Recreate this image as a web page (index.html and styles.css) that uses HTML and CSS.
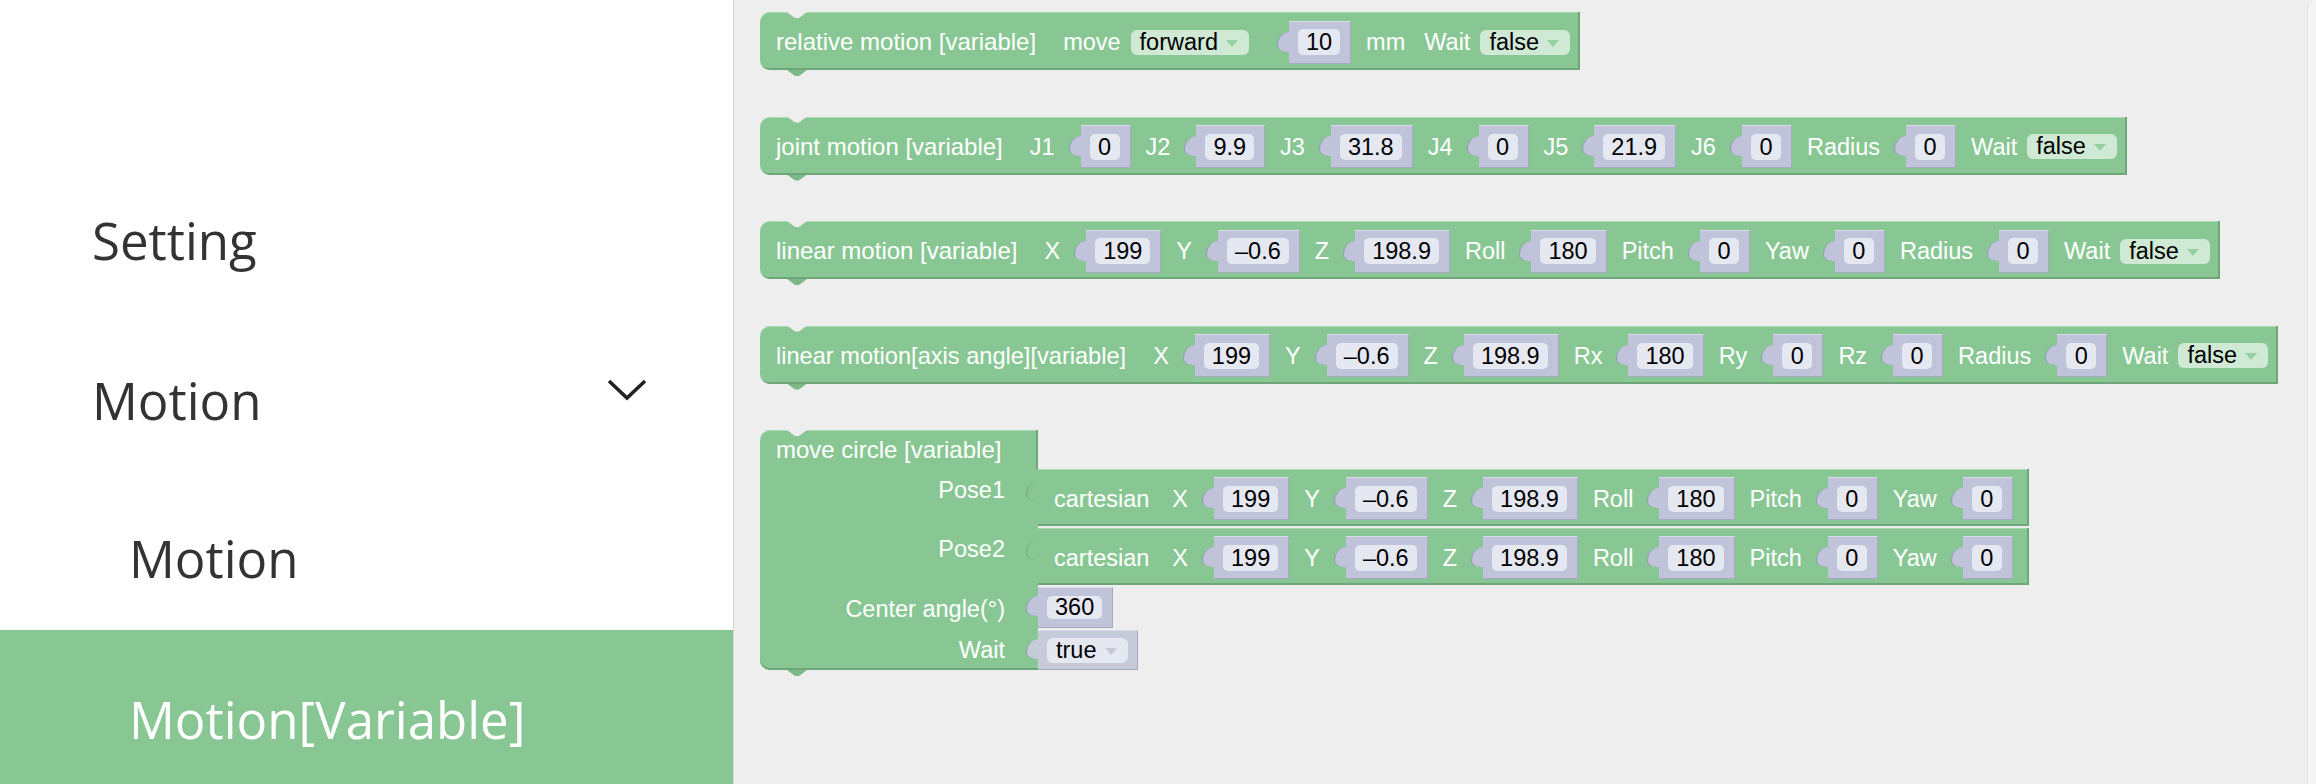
FILE: index.html
```html
<!DOCTYPE html>
<html>
<head>
<meta charset="utf-8">
<link rel="stylesheet" href="styles.css">
</head>
<body>
<div class="app">
  <nav class="side">
    <div class="item l1">Setting</div>
    <div class="item l1"><span>Motion</span>
      <svg class="chev" width="40" height="24" viewBox="0 0 40 24"><polyline points="2,3 20,20 38,3" fill="none" stroke="#222" stroke-width="3.6"/></svg>
    </div>
    <div class="item l2">Motion</div>
    <div class="item l2 active">Motion[Variable]</div>
  </nav>
  <main class="ws">
    <div class="blk">
      <span class="ttl">relative motion [variable]</span>
      <span class="lbl">move</span>
      <span class="dd">forward<i class="arr"></i></span>
      <span class="val"><span class="fld">10</span></span>
      <span class="lbl">mm</span>
      <span class="lbl">Wait</span>
      <span class="dd">false<i class="arr"></i></span>
    </div>
    <div class="blk">
      <span class="ttl">joint motion [variable]</span>
      <span class="lbl">J1</span><span class="val"><span class="fld">0</span></span>
      <span class="lbl">J2</span><span class="val"><span class="fld">9.9</span></span>
      <span class="lbl">J3</span><span class="val"><span class="fld">31.8</span></span>
      <span class="lbl">J4</span><span class="val"><span class="fld">0</span></span>
      <span class="lbl">J5</span><span class="val"><span class="fld">21.9</span></span>
      <span class="lbl">J6</span><span class="val"><span class="fld">0</span></span>
      <span class="lbl">Radius</span><span class="val"><span class="fld">0</span></span>
      <span class="lbl">Wait</span><span class="dd">false<i class="arr"></i></span>
    </div>
    <div class="blk">
      <span class="ttl">linear motion [variable]</span>
      <span class="lbl">X</span><span class="val"><span class="fld">199</span></span>
      <span class="lbl">Y</span><span class="val"><span class="fld">–0.6</span></span>
      <span class="lbl">Z</span><span class="val"><span class="fld">198.9</span></span>
      <span class="lbl">Roll</span><span class="val"><span class="fld">180</span></span>
      <span class="lbl">Pitch</span><span class="val"><span class="fld">0</span></span>
      <span class="lbl">Yaw</span><span class="val"><span class="fld">0</span></span>
      <span class="lbl">Radius</span><span class="val"><span class="fld">0</span></span>
      <span class="lbl">Wait</span><span class="dd">false<i class="arr"></i></span>
    </div>
    <div class="blk">
      <span class="ttl t4">linear motion[axis angle][variable]</span>
      <span class="lbl">X</span><span class="val"><span class="fld">199</span></span>
      <span class="lbl">Y</span><span class="val"><span class="fld">–0.6</span></span>
      <span class="lbl">Z</span><span class="val"><span class="fld">198.9</span></span>
      <span class="lbl">Rx</span><span class="val"><span class="fld">180</span></span>
      <span class="lbl">Ry</span><span class="val"><span class="fld">0</span></span>
      <span class="lbl">Rz</span><span class="val"><span class="fld">0</span></span>
      <span class="lbl">Radius</span><span class="val"><span class="fld">0</span></span>
      <span class="lbl">Wait</span><span class="dd">false<i class="arr"></i></span>
    </div>
    <div class="circ">
      <div class="cc chead">move circle [variable]</div>
      <div class="cc clbl top">Pose1</div>
      <div class="cin">
        <div class="blk out">
          <span class="ttl">cartesian</span>
          <span class="lbl">X</span><span class="val"><span class="fld">199</span></span>
          <span class="lbl">Y</span><span class="val"><span class="fld">–0.6</span></span>
          <span class="lbl">Z</span><span class="val"><span class="fld">198.9</span></span>
          <span class="lbl">Roll</span><span class="val"><span class="fld">180</span></span>
          <span class="lbl">Pitch</span><span class="val"><span class="fld">0</span></span>
          <span class="lbl">Yaw</span><span class="val"><span class="fld">0</span></span>
        </div>
      </div>
      <div class="cc clbl top">Pose2</div>
      <div class="cin">
        <div class="blk out">
          <span class="ttl">cartesian</span>
          <span class="lbl">X</span><span class="val"><span class="fld">199</span></span>
          <span class="lbl">Y</span><span class="val"><span class="fld">–0.6</span></span>
          <span class="lbl">Z</span><span class="val"><span class="fld">198.9</span></span>
          <span class="lbl">Roll</span><span class="val"><span class="fld">180</span></span>
          <span class="lbl">Pitch</span><span class="val"><span class="fld">0</span></span>
          <span class="lbl">Yaw</span><span class="val"><span class="fld">0</span></span>
        </div>
      </div>
      <div class="cc clbl">Center angle(°)</div>
      <div class="cin"><span class="val cval"><span class="fld small">360</span></span></div>
      <div class="cc clbl last">Wait</div>
      <div class="cin"><span class="val cval bool"><span class="dd grey">true<i class="arr"></i></span></span></div>
    </div>
  </main>
</div>
</body>
</html>
```

FILE: styles.css
```css
* { box-sizing: border-box; }
html, body { margin: 0; padding: 0; }
body { width: 2316px; height: 784px; overflow: hidden; background: #eeeeee; }

.app { display: flex; height: 784px; }

.side {
  width: 734px;
  flex: none;
  background: #ffffff;
  border-right: 1px solid #d6d6d6;
  padding-top: 160px;
  font-family: "Open Sans", "Noto Sans", sans-serif;
  font-size: 51px;
  color: #333333;
}
.item { display: flex; align-items: center; height: 160px; padding-left: 92px; padding-right: 86px; }
.item.l1 span { flex: none; }
.chev { margin-left: auto; margin-bottom: 20px; }
.item.l2 { padding-left: 129px; height: 150px; padding-top: 6px; }
.item.active { background: #88c794; color: #ffffff; height: 160px; padding-top: 18px; }

.ws {
  flex: 1;
  display: flex;
  flex-direction: column;
  align-items: flex-start;
  gap: 46.5px;
  padding: 12px 0 0 26px;
  font-family: "Liberation Sans", Arial, sans-serif;
  font-size: 23.5px;
  color: #ffffff;
  position: relative;
}
.ws::after {
  content: "";
  position: absolute;
  top: 0; right: 0; bottom: 0;
  width: 8px;
  background: #f4f4f4;
  border-left: 1px solid #e4e4e4;
  border-top-left-radius: 8px;
}

/* statement block */
.blk {
  position: relative;
  display: flex;
  align-items: center;
  height: 58px;
  padding: 2px 10px 0 16px;
  background: #88c794;
  border-radius: 10px 0 0 10px;
  box-shadow: inset -2px -2px 0 #6ea579, inset 0 1px 0 #a9dab3;
  white-space: nowrap;
}
.blk::before {
  content: "";
  position: absolute;
  top: 0; left: 27px;
  width: 20px; height: 6px;
  background: #eeeeee;
  clip-path: polygon(0 0, 100% 0, 60% 100%, 40% 100%);
}
.blk::after {
  content: "";
  position: absolute;
  bottom: -6px; left: 27px;
  width: 20px; height: 6px;
  background: #7db889;
  clip-path: polygon(0 0, 100% 0, 60% 100%, 40% 100%);
}
.ttl { line-height: 26px; font-size: 24px; }
.ttl.t4 { font-size: 23.6px; }
.ttl + * { margin-left: 27px !important; }
.lbl { line-height: 26px; }
.lbl + .lbl { margin-left: 19px; }
.lbl + .dd { margin-left: 10px; }
.val + .lbl { margin-left: 15px; }

/* value input (number shadow) */
.val {
  position: relative;
  display: flex;
  align-items: center;
  height: 43px;
  margin-left: 26px;
  padding: 0 10px 0 9px;
  background: #c0c3d9;
  border-top: 1px solid #dadcea;
  border-right: 1px solid #a6a9c0;
  border-bottom: 1px solid #a6a9c0;
}
.dd + .val { margin-left: 40px; }
.val::before {
  content: "";
  position: absolute;
  left: -12px; top: 10px;
  width: 12px; height: 20px;
  background: #c0c3d9;
  border-left: 1px solid #8e9bb0;
  border-radius: 12px 0 0 10px / 14px 0 0 6px;
}
.fld {
  display: block;
  min-width: 30px;
  height: 26px;
  line-height: 26px;
  padding: 0 8px;
  text-align: center;
  background: #e5e7f1;
  border-radius: 5px;
  color: #000000;
}

/* dropdown */
.dd {
  display: flex;
  align-items: center;
  height: 25px;
  line-height: 25px;
  padding: 0 11px 0 9px;
  background: #d0e9d5;
  border-radius: 6px;
  color: #000000;
}
.arr {
  display: block;
  width: 0; height: 0;
  margin-left: 8px;
  margin-top: 2px;
  border-left: 6px solid transparent;
  border-right: 6px solid transparent;
  border-top: 7px solid #96cfa0;
}
.dd.grey { background: #e5e8f0; }
.dd.grey .arr { border-top-color: #c3c9d8; }

/* move circle composite block */
.circ {
  position: relative;
  display: grid;
  grid-template-columns: 278px auto;
  grid-template-rows: 39px 59px 59px 43px 40px;
  align-items: start;
}
.circ::before {
  content: "";
  position: absolute;
  top: 0; left: 27px;
  width: 20px; height: 6px;
  background: #eeeeee;
  clip-path: polygon(0 0, 100% 0, 60% 100%, 40% 100%);
  z-index: 2;
}
.circ::after {
  content: "";
  position: absolute;
  bottom: -6px; left: 27px;
  width: 20px; height: 6px;
  background: #7db889;
  clip-path: polygon(0 0, 100% 0, 60% 100%, 40% 100%);
}
.cc {
  align-self: stretch;
  background: #88c794;
  grid-column: 1;
}
.chead {
  grid-row: 1;
  border-top-left-radius: 10px;
  padding: 7px 0 0 16px;
  line-height: 26px;
  font-size: 24px;
  box-shadow: inset -2px 0 0 #6ea579, inset 0 1px 0 #a9dab3;
}
.clbl {
  display: flex;
  align-items: center;
  justify-content: flex-end;
  padding-right: 33px;
  line-height: 26px;
}
.clbl.top { align-items: flex-start; padding-top: 8px; }
.clbl.last { border-bottom-left-radius: 10px; box-shadow: inset 0 -2px 0 #6ea579; }
.cin { grid-column: 2; display: flex; align-items: flex-start; }

.blk.out {
  border-radius: 0;
  height: 57px;
  padding-left: 16px;
  padding-right: 16px;
}
.blk.out::before {
  left: -12px; top: 12px;
  width: 12px; height: 20px;
  background: transparent;
  clip-path: none;
  border-left: 1px solid #6ea579;
  border-radius: 12px 0 0 10px / 14px 0 0 6px;
}
.blk.out::after { display: none; }
.blk.out .ttl + * { margin-left: 23px !important; }
.blk.out .ttl { font-size: 23.5px; }

.val.cval { margin-left: 0; height: 41px; padding: 0 10px 0 9px; }
.val.cval::before { top: 8px; }
.fld.small { height: 23px; line-height: 23px; }
.val.bool { height: 40px; background: #c5cbd9; padding: 0 9px 0 9px; }
.val.bool::before { background: #c5cbd9; }
```
